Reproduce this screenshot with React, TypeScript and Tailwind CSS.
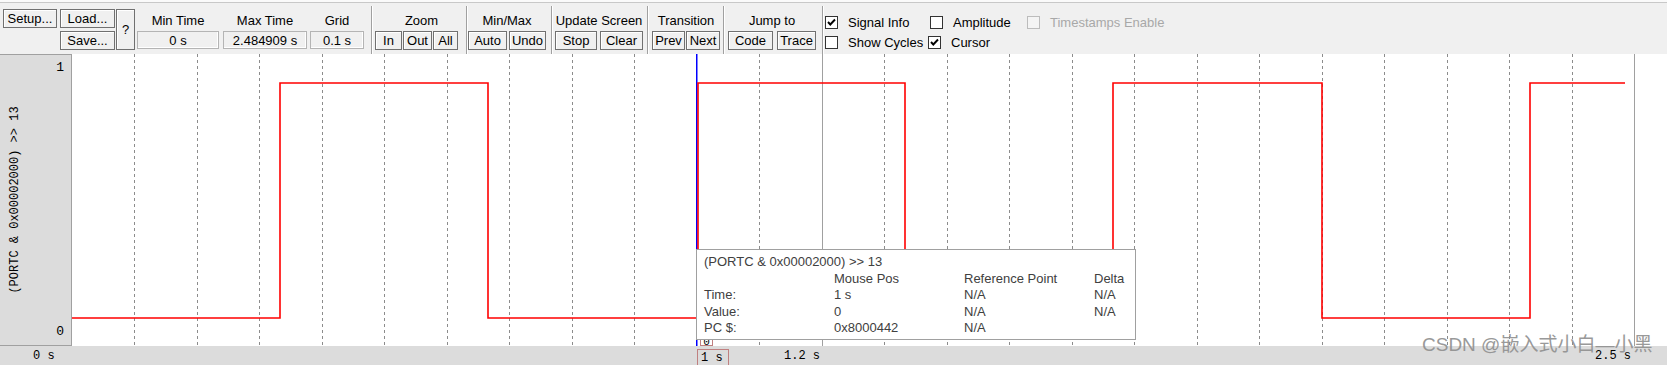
import React from 'react'

function Btn({ className, children }: { className: string; children: React.ReactNode }) {
  return (
    <div
      className={`border border-[#707070] bg-[#f0f0f0] shadow-[inset_1px_1px_0_#ffffff] flex items-center justify-center text-[13px] leading-none text-black ${className}`}
    >
      {children}
    </div>
  )
}

function Field({ className, children }: { className: string; children: React.ReactNode }) {
  return (
    <div
      className={`h-[18px] border border-[#b4b4b4] bg-[#f0f0f0] shadow-[inset_-1px_-1px_0_#ffffff] flex items-center justify-center text-[13px] leading-none ${className}`}
    >
      {children}
    </div>
  )
}

function Group({ label, className, labelClass = '', children }: { label: string; className: string; labelClass?: string; children: React.ReactNode }) {
  return (
    <div className={`mt-[3px] flex flex-col ${className}`}>
      <div className={`h-[22px] pt-[1px] flex items-center justify-center text-[13px] whitespace-nowrap ${labelClass}`}>{label}</div>
      <div className="flex">{children}</div>
    </div>
  )
}

function Sep({ className }: { className: string }) {
  return <div className={`h-[48px] w-[2px] border-l border-[#a0a0a0] bg-white ${className}`} />
}

function Check({ label, checked, disabled }: { label: string; checked?: boolean; disabled?: boolean }) {
  return (
    <div className="flex items-center h-[13px]">
      <div
        className={
          disabled
            ? 'w-[13px] h-[13px] border border-[#bcbcbc] bg-[#f4f4f4]'
            : 'w-[13px] h-[13px] border border-[#333333] bg-white'
        }
      >
        {checked && (
          <svg width="11" height="11" viewBox="0 0 11 11">
            <path d="M2 5 L4.3 7.5 L9 2.5" fill="none" stroke="#000" strokeWidth="1.9" />
          </svg>
        )}
      </div>
      <span className={`ml-[10px] text-[13px] whitespace-nowrap ${disabled ? 'text-[#a8a8a8]' : 'text-black'}`}>
        {label}
      </span>
    </div>
  )
}

export default function App() {
  const grid = Array.from({ length: 25 }, (_, i) => i + 1)
  const signal = 'M0 264 H208 V29 H416 V264 H626 V29 H833 V264 H1041 V29 H1250 V264 H1458 V29 H1553'

  return (
    <div className="relative w-[1667px] h-[365px] overflow-hidden bg-[#f0f0f0] text-black font-['Liberation_Sans',Arial,sans-serif]">
      {/* top edge */}
      <div className="h-[3px] bg-[#fafafa] border-b border-[#c8c8c8]" />

      {/* Toolbar */}
      <div className="h-[51px] pt-[3px] flex items-start">
        <div className="ml-[3px] mt-[3px] flex">
          <Btn className="w-[54px] h-[19px]">Setup...</Btn>
          <div className="ml-[3px] flex flex-col gap-[3px]">
            <Btn className="w-[55px] h-[19px]">Load...</Btn>
            <Btn className="w-[55px] h-[19px]">Save...</Btn>
          </div>
          <Btn className="ml-[1px] w-[19px] h-[41px]">?</Btn>
        </div>

        <Group label="Min Time" className="ml-[2px]">
          <Field className="w-[82px]">0 s</Field>
        </Group>
        <Group label="Max Time" className="ml-[4px]">
          <Field className="w-[84px]">2.484909 s</Field>
        </Group>
        <Group label="Grid" className="ml-[3px]">
          <Field className="w-[54px]">0.1 s</Field>
        </Group>

        <Sep className="ml-[7px]" />
        <Group label="Zoom" className="ml-[2px]" labelClass="pl-[10px]">
          <Btn className="w-[27px] h-[19px]">In</Btn>
          <Btn className="ml-[1px] w-[29px] h-[19px]">Out</Btn>
          <Btn className="ml-[1px] w-[25px] h-[19px]">All</Btn>
        </Group>

        <Sep className="ml-[8px]" />
        <Group label="Min/Max" className="ml-0">
          <Btn className="w-[39px] h-[19px]">Auto</Btn>
          <Btn className="ml-[2px] w-[37px] h-[19px]">Undo</Btn>
        </Group>

        <Sep className="ml-[5px]" />
        <Group label="Update Screen" className="ml-[2px]">
          <Btn className="w-[42px] h-[19px]">Stop</Btn>
          <Btn className="ml-[3px] w-[43px] h-[19px]">Clear</Btn>
        </Group>

        <Sep className="ml-[4px]" />
        <Group label="Transition" className="ml-[3px]">
          <Btn className="w-[33px] h-[19px]">Prev</Btn>
          <Btn className="ml-[1px] w-[34px] h-[19px]">Next</Btn>
        </Group>

        <Sep className="ml-[3px]" />
        <Group label="Jump to" className="ml-[3px]">
          <Btn className="w-[45px] h-[19px]">Code</Btn>
          <Btn className="ml-[4px] w-[39px] h-[19px]">Trace</Btn>
        </Group>

        <Sep className="ml-[6px]" />
        <div className="ml-[1px] mt-[10px] grid grid-cols-[105px_97px_auto] gap-y-[7px]">
          <Check label="Signal Info" checked />
          <Check label="Amplitude" />
          <Check label="Timestamps Enable" disabled />
          <Check label="Show Cycles" />
          <div className="-ml-[2px]">
            <Check label="Cursor" checked />
          </div>
        </div>
      </div>

      {/* Plot */}
      <div className="flex h-[292px]">
        <div className="w-[72px] flex bg-[#dcdcdc] border-r border-b border-t border-[#a0a0a0]">
          <div className="w-[30px] flex items-center justify-center">
            <span className="-rotate-90 whitespace-nowrap text-[12px] font-['Liberation_Mono',monospace]">
              (PORTC &amp; 0x00002000) &gt;&gt; 13
            </span>
          </div>
          <div className="flex-1 flex flex-col justify-between items-end pr-[7px] py-[5px] text-[13px] leading-[16px] font-['Liberation_Mono',monospace]">
            <span>1</span>
            <span>0</span>
          </div>
        </div>

        <div className="relative flex-1 bg-white">
          <svg width="1595" height="292" className="absolute left-0 top-0">
            {grid.map((k) => {
              const x = Math.floor(62.5 * k) + 0.5
              if (k === 10) return null
              if (k === 12 || k === 25)
                return <line key={k} x1={x} x2={x} y1={0} y2={292} stroke="#a0a0a0" strokeWidth="1" />
              return (
                <line key={k} x1={x} x2={x} y1={0} y2={292} stroke="#8c8c8c" strokeWidth="1" strokeDasharray="3 3" />
              )
            })}
            <line x1={624.75} x2={624.75} y1={0} y2={292} stroke="#0000ff" strokeWidth="1.5" />
            <path d={signal} fill="none" stroke="#ff0000" strokeWidth="1.6" />
          </svg>

          {/* value box at cursor */}
          <div className="absolute left-[628px] top-[283px] w-[13px] h-[9px] overflow-hidden border border-[#c08080] bg-white text-[11px] leading-[9px] text-center font-['Liberation_Mono',monospace]">
            0
          </div>

          {/* Signal info tooltip */}
          <div className="absolute left-[624px] top-[195px] w-[440px] h-[91px] border border-[#a0a0a0] bg-white pl-[7px] pt-[4px] text-[13px] leading-[16.5px] text-[#404040]">
            <div>(PORTC &amp; 0x00002000) &gt;&gt; 13</div>
            <div className="grid grid-cols-[130px_130px_130px_auto]">
              <span />
              <span>Mouse Pos</span>
              <span>Reference Point</span>
              <span>Delta</span>
              <span>Time:</span>
              <span>1 s</span>
              <span>N/A</span>
              <span>N/A</span>
              <span>Value:</span>
              <span>0</span>
              <span>N/A</span>
              <span>N/A</span>
              <span>PC $:</span>
              <span>0x8000442</span>
              <span>N/A</span>
              <span />
            </div>
          </div>
        </div>
      </div>

      {/* Time axis */}
      <div className="relative h-[19px] bg-[#dcdcdc] text-[12px] leading-[19px] font-['Liberation_Mono',monospace]">
        <span className="absolute left-[33px] top-[1px]">0 s</span>
        <div className="absolute left-[697px] top-[3px] w-[32px] h-[18px] border border-[#c08080] pl-[3px] leading-[16px]">
          1 s
        </div>
        <span className="absolute left-[784px] top-[1px]">1.2 s</span>
        <span className="absolute left-[1595px] top-[1px]">2.5 s</span>
      </div>

      {/* watermark */}
      <div className="absolute left-[1422px] top-[333px] text-[19px] leading-[24px] whitespace-nowrap text-[#8f8f8f] opacity-90 font-['Liberation_Sans','Noto_Sans_CJK_SC',sans-serif]">
        CSDN @嵌入式小白—小黑
      </div>
    </div>
  )
}
